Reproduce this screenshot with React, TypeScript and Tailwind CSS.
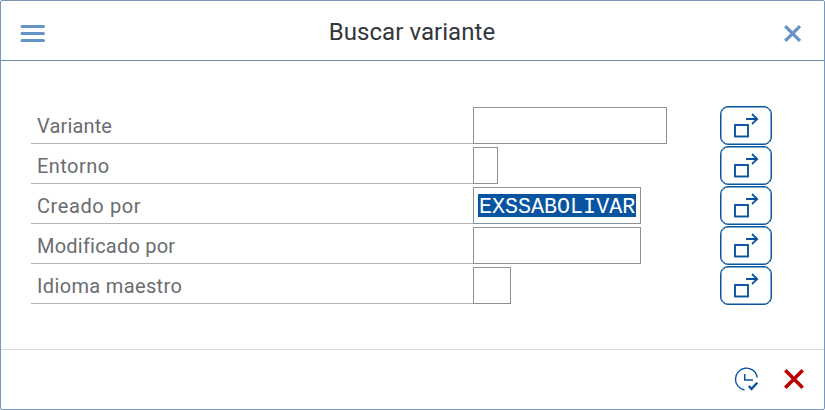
type Row = { label: string; track: string; field: string; value?: string };

const rows: Row[] = [
  { label: "Variante", track: "tracking-[0.15px]", field: "w-[194px]" },
  { label: "Entorno", track: "tracking-[0.45px]", field: "w-[25px]" },
  { label: "Creado por", track: "tracking-[0.6px]", field: "w-[168px]", value: "EXSSABOLIVAR" },
  { label: "Modificado por", track: "tracking-[0.22px]", field: "w-[168px]" },
  { label: "Idioma maestro", track: "tracking-[0.35px]", field: "w-[38px]" },
];

function MultiSelectIcon() {
  return (
    <svg className="shrink-0" width="52" height="39" viewBox="0 0 52 39" fill="none" stroke="#0854a0">
      <rect x="15" y="19" width="13" height="11.5" strokeWidth="1.9" />
      <path d="M26 13H37.2M32 8l5.2 5l-5.2 5" strokeWidth="1.8" />
    </svg>
  );
}

export default function App() {
  return (
    <div className="flex h-[410px] w-[825px] flex-col rounded-[2px] border border-[#7a97b9] bg-white font-[Roboto,sans-serif]">
      <header className="flex h-[60px] shrink-0 items-center border-b border-[#6f8fb6] pl-[19px] pr-[22px] pt-[5px]">
        <button className="h-[18px] w-[26px]" aria-label="Menú">
          <svg width="26" height="18" viewBox="0 0 26 18" stroke="#6494c6" strokeWidth="3" strokeLinecap="round">
            <path d="M2 2.5H23.5M2 9.5H23.5M2 16.5H23.5" />
          </svg>
        </button>
        <h1 className="flex-1 pb-[3px] pr-[6px] text-center text-[24px] leading-[30px] tracking-[0.06px] text-[#32363a]">
          Buscar variante
        </h1>
        <button className="h-[18px] w-[18px]" aria-label="Cerrar">
          <svg width="18" height="18" viewBox="0 0 18 18" stroke="#6494c6" strokeWidth="3.2">
            <path d="M1.2 2.1L16 16.9M16 2.1L1.2 16.9" />
          </svg>
        </button>
      </header>
      <main className="flex flex-1 flex-col pl-[30px] pt-[43px]">
        {rows.map((row) => (
          <div key={row.label} className="flex h-10 items-end">
            <label className="flex h-10 w-[442px] items-center border-b border-[#b4b4b4] pl-[6px] pt-[5px] text-[20px] text-[#6a6d70]">
              <span className={row.track}>{row.label}</span>
            </label>
            <div className="w-[247px]">
              <div className={`flex h-[37px] items-center border border-[#89919a] pl-[4px] ${row.field}`}>
                {row.value && (
                  <span className="h-[23px] w-[158px] whitespace-pre bg-[#0854a0] pl-px font-['Liberation_Mono',monospace] text-[21.7px] leading-[27px] text-white">
                    {row.value}
                  </span>
                )}
              </div>
            </div>
            <button className="-mb-px flex h-[39px] w-[52px] items-center justify-center rounded-[8px] border border-[#0854a0] shadow-[inset_0_0_0_0.5px_#0854a0]" aria-label="Selección múltiple">
              <MultiSelectIcon />
            </button>
          </div>
        ))}
      </main>
      <footer className="flex h-[60px] shrink-0 items-center justify-end gap-[25px] border-t border-[#d9d9d9] pb-[2px] pr-[20px]">
        <button className="h-[26px] w-[26px]" aria-label="Ejecutar">
          <svg width="26" height="26" viewBox="0 0 26 26" fill="none" stroke="#0854a0">
            <path d="M24 10A11 11 0 1 0 11.5 24M23.8 9.5L24.2 11.5" strokeWidth="1.4" />
            <path d="M11.7 8V14H20" strokeWidth="1.5" />
            <path d="M15.8 20L18.5 23L24.2 16.7" strokeWidth="2.4" />
          </svg>
        </button>
        <button className="h-[20px] w-[20px]" aria-label="Cancelar">
          <svg width="20" height="20" viewBox="0 0 20 20" stroke="#bb0000" strokeWidth="3.6">
            <path d="M1.3 1.3L18.7 18.7M18.7 1.3L1.3 18.7" />
          </svg>
        </button>
      </footer>
    </div>
  );
}
